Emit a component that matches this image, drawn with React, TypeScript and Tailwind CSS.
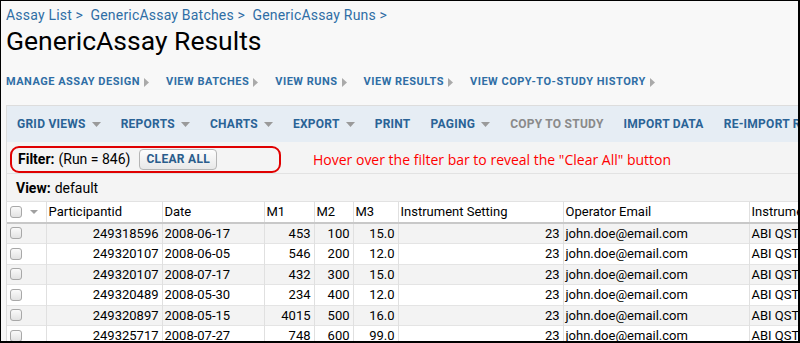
import React from "react";

const rows = [
  ["249318596", "2008-06-17", "453", "100", "15.0"],
  ["249320107", "2008-06-05", "546", "200", "12.0"],
  ["249320107", "2008-07-17", "432", "300", "15.0"],
  ["249320489", "2008-05-30", "234", "400", "12.0"],
  ["249320897", "2008-05-15", "4015", "500", "16.0"],
  ["249325717", "2008-07-27", "748", "600", "99.0"],
];

const Tri = () => (
  <svg width="6" height="9" viewBox="0 0 6 9" className="ml-[4px] inline-block">
    <path d="M0 0 L5 4.5 L0 9 Z" fill="#aaaaaa" />
  </svg>
);

const Caret = () => (
  <svg width="9" height="5" viewBox="0 0 9 5" className="ml-[6px] inline-block">
    <path d="M0 0 L9 0 L4.5 5 Z" fill="#9a9a9a" />
  </svg>
);

const Check = () => (
  <div className="w-[12px] h-[12px] rounded-[3px] border border-[#a8a8a8] bg-gradient-to-b from-[#fafafa] to-[#e2e2e2]" />
);

export default function App() {
  const nav = ["MANAGE ASSAY DESIGN", "VIEW BATCHES", "VIEW RUNS", "VIEW RESULTS", "VIEW COPY-TO-STUDY HISTORY"];
  const tools: [string, boolean, boolean][] = [
    ["GRID VIEWS", true, false],
    ["REPORTS", true, false],
    ["CHARTS", true, false],
    ["EXPORT", true, false],
    ["PRINT", false, false],
    ["PAGING", true, false],
    ["COPY TO STUDY", false, true],
    ["IMPORT DATA", false, false],
    ["RE-IMPORT RUN", false, false],
  ];
  return (
    <div
      className="w-[800px] h-[343px] overflow-hidden bg-[#f8f8f8] border-t border-l border-r-2 border-b-2 border-black"
      style={{ fontFamily: "Roboto, 'Liberation Sans', sans-serif" }}
    >
      <div className="px-[5px] pt-[5px]">
        <div className="h-[18px] leading-[18px] text-[14px] tracking-[0.2px] text-[#2f6ea5] whitespace-nowrap">
          Assay List &gt;&nbsp; GenericAssay Batches &gt;&nbsp; GenericAssay Runs &gt;
        </div>
        <div className="h-[34px] leading-[34px] text-[26.5px] text-black whitespace-nowrap">GenericAssay Results</div>
        <div className="mt-[16px] h-[16px] flex items-center gap-[16px] text-[11px] font-bold text-[#2f6ea5] tracking-[0.5px] whitespace-nowrap">
          {nav.map((n) => (
            <span key={n} className="flex items-center">
              {n}
              <Tri />
            </span>
          ))}
        </div>
      </div>
      <div className="ml-[5px] mt-[15px] w-[900px] border-t border-l border-[#dddddd]">
        <div className="h-[36px] bg-[#e6edf4] flex items-center pl-[10px] gap-[20px] text-[12px] font-bold tracking-[0.25px] whitespace-nowrap">
          {tools.map(([t, caret, dis]) => (
            <span key={t} className={"flex items-center " + (dis ? "text-[#8a8a8a]" : "text-[#2a6396]")}>
              {t}
              {caret && <Caret />}
            </span>
          ))}
        </div>
        <div className="bg-[#f4f4f4]">
          <div className="h-[32px] flex items-center border-b border-[#e2e2e2]">
            <div className="ml-[3px] mt-[3px] h-[27px] w-[271px] border-2 border-[#e00000] rounded-[9px] flex items-center pl-[6px] text-[14px] text-black whitespace-nowrap">
              <span className="font-bold">Filter:</span>
              <span className="ml-[4px]">(Run = 846)</span>
              <span className="ml-[9px] h-[21px] px-[6px] flex items-center rounded-[4px] border border-[#b5b5b5] bg-gradient-to-b from-[#fdfdfd] to-[#e8e8e8] text-[12px] font-bold tracking-[0.3px] text-[#2a5d8c]">
                CLEAR ALL
              </span>
            </div>
            <span
              className="ml-[32px] mt-[3px] text-[14px] text-[#ff0000] whitespace-nowrap"
              style={{ fontFamily: "'Open Sans', 'Noto Sans', sans-serif" }}
            >
              Hover over the filter bar to reveal the "Clear All" button
            </span>
          </div>
          <div className="h-[28px] flex items-center pl-[9px] pt-[2px] text-[14px] text-black border-b border-[#e2e2e2]">
            <span className="font-bold">View:</span>
            <span className="ml-[4px]">default</span>
          </div>
        </div>
        <table className="border-collapse text-[13px] text-black bg-white" style={{ tableLayout: "fixed" }}>
          <colgroup>
            <col style={{ width: 39 }} />
            <col style={{ width: 116 }} />
            <col style={{ width: 102 }} />
            <col style={{ width: 50 }} />
            <col style={{ width: 39 }} />
            <col style={{ width: 45 }} />
            <col style={{ width: 165 }} />
            <col style={{ width: 186 }} />
            <col style={{ width: 120 }} />
          </colgroup>
          <thead>
            <tr className="h-[20px] border-b-2 border-[#c8c8c8]">
              <th className="px-[2px] border-r border-[#e0e0e0] font-normal text-left">
                <div className="flex items-center gap-[8px] pl-[1px]">
                  <Check />
                  <svg width="8" height="4" viewBox="0 0 8 4">
                    <path d="M0 0 L8 0 L4 4 Z" fill="#a0a0a0" />
                  </svg>
                </div>
              </th>
              {["Participantid", "Date", "M1", "M2", "M3", "Instrument Setting", "Operator Email", "Instrument"].map((h) => (
                <th key={h} className="px-[2px] border-r border-[#e0e0e0] font-normal text-left whitespace-nowrap overflow-hidden">
                  {h}
                </th>
              ))}
            </tr>
          </thead>
          <tbody>
            {rows.map((r, i) => (
              <tr key={i} className={"h-[20px] border-b border-[#e4e4e4] " + (i % 2 === 0 ? "bg-[#f3f3f3]" : "bg-white")}>
                <td className="px-[2px] border-r border-[#e0e0e0]">
                  <div className="pl-[1px]">
                    <Check />
                  </div>
                </td>
                <td className="px-[3px] text-right border-r border-[#e0e0e0]">{r[0]}</td>
                <td className="px-[2px] text-left border-r border-[#e0e0e0]">{r[1]}</td>
                <td className="px-[3px] text-right border-r border-[#e0e0e0]">{r[2]}</td>
                <td className="px-[3px] text-right border-r border-[#e0e0e0]">{r[3]}</td>
                <td className="px-[3px] text-right border-r border-[#e0e0e0]">{r[4]}</td>
                <td className="px-[3px] text-right border-r border-[#e0e0e0]">23</td>
                <td className="px-[2px] text-left border-r border-[#e0e0e0] whitespace-nowrap">john.doe@email.com</td>
                <td className="px-[2px] text-left border-r border-[#e0e0e0] whitespace-nowrap">ABI QSTAR</td>
              </tr>
            ))}
          </tbody>
        </table>
      </div>
    </div>
  );
}
